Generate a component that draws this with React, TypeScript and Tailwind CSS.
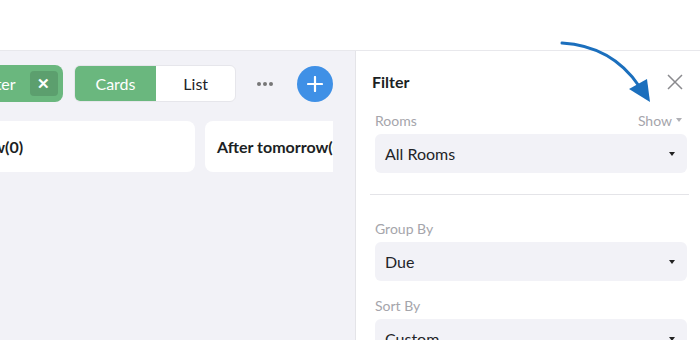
import React from "react";

const Caret = ({ className = "" }: { className?: string }) => (
  <svg width="6" height="4" viewBox="0 0 6 4" className={className}>
    <path d="M0 0 L6 0 L3 4 Z" fill="currentColor" />
  </svg>
);

function SelectBox({ value }: { value: string }) {
  return (
    <div className="h-[39px] rounded-md bg-[#f2f2f7] flex items-center justify-between pl-[10px] pr-[12px] text-[16px] text-[#222428]">
      <span>{value}</span>
      <Caret className="text-[#222]" />
    </div>
  );
}

export default function App() {
  return (
    <div
      className="relative w-[700px] h-[340px] overflow-hidden flex flex-col bg-white"
      style={{ fontFamily: "Lato, 'Open Sans', sans-serif" }}
    >
      <div className="h-[51px] bg-white border-b border-[#e8e8ec] shrink-0" />
      <div className="flex flex-1 min-h-0">
        {/* board */}
        <div className="w-[355px] bg-[#f2f2f7] shrink-0 overflow-hidden">
          <div className="w-[333px] overflow-hidden pt-[14px]">
            <div className="flex items-center h-[37px] ml-[-41px]">
              <div className="flex items-center h-[37px] rounded-lg bg-[#6ab77e] pl-[20px] pr-[5px]">
                <span className="text-[16px] text-white">Filter</span>
                <span className="ml-[14px] w-[28px] h-[25px] rounded-[4px] bg-[#5c9f6e] flex items-center justify-center text-white text-[15px] font-bold">
                  ✕
                </span>
              </div>
              <div className="ml-[11px] flex h-[37px] rounded-md overflow-hidden border border-[#e6e6eb] bg-white">
                <div className="w-[82px] bg-[#6ab77e] text-white text-[16px] flex items-center justify-center">Cards</div>
                <div className="w-[79px] text-[#222428] text-[16px] flex items-center justify-center">List</div>
              </div>
              <div className="ml-[21px] flex gap-[2px] items-center">
                <span className="w-[4px] h-[4px] rounded-full bg-[#777]" />
                <span className="w-[4px] h-[4px] rounded-full bg-[#777]" />
                <span className="w-[4px] h-[4px] rounded-full bg-[#777]" />
              </div>
              <div className="ml-[24px] w-[36px] h-[36px] rounded-full bg-[#3f90e6] flex items-center justify-center">
                <svg width="16" height="16" viewBox="0 0 16 16">
                  <path d="M8 1 V15 M1 8 H15" stroke="white" strokeWidth="2.2" strokeLinecap="round" />
                </svg>
              </div>
            </div>
            <div className="flex gap-[10px] mt-[19px] ml-[-92px]">
              <div className="w-[287px] h-[51px] shrink-0 rounded-lg bg-white flex items-center px-[12px]">
                <span className="text-[16px] font-bold text-[#1c1f24] pl-[12px]">Tomorrow(0)</span>
              </div>
              <div className="w-[285px] h-[51px] shrink-0 rounded-lg bg-white flex items-center px-[12px]">
                <span className="text-[16px] font-bold text-[#1c1f24] whitespace-nowrap">After tomorrow(0)</span>
              </div>
            </div>
          </div>
        </div>
        {/* filter panel */}
        <div className="flex-1 border-l border-[#e4e4e8] bg-white px-[13px]">
          <div className="flex items-center justify-between h-[34px] mt-[14px] pl-[3px] pr-[4px]">
            <span className="text-[16px] font-bold text-[#1c1f24]">Filter</span>
            <svg width="16" height="16" viewBox="0 0 16 16">
              <path d="M1 1 L15 15 M15 1 L1 15" stroke="#8a8a8e" strokeWidth="1.5" />
            </svg>
          </div>
          <div className="pl-[6px]">
            <div className="flex items-center justify-between h-[20px] mt-[11px] pr-[5px] text-[14px] text-[#a5a5ab]">
              <span>Rooms</span>
              <span className="flex items-center gap-[4px]">
                Show <Caret className="text-[#b0b0b5]" />
              </span>
            </div>
            <div className="mt-[4px]">
              <SelectBox value="All Rooms" />
            </div>
          </div>
          <div className="h-px bg-[#e4e4e8] mt-[21px] ml-[1px] mr-[-2px]" />
          <div className="pl-[6px]">
            <div className="h-[20px] mt-[23px] text-[14px] text-[#a5a5ab] flex items-center">Group By</div>
            <div className="mt-[4px]">
              <SelectBox value="Due" />
            </div>
            <div className="h-[20px] mt-[14px] text-[14px] text-[#a5a5ab] flex items-center">Sort By</div>
            <div className="mt-[4px]">
              <SelectBox value="Custom" />
            </div>
          </div>
        </div>
      </div>
      {/* annotation arrow */}
      <svg className="absolute left-0 top-0 pointer-events-none" width="700" height="340">
        <path d="M562 43 Q612 46 639 86" stroke="#1b6fbd" strokeWidth="3" fill="none" strokeLinecap="round" />
        <polygon points="650,102 629,89 647,79" fill="#1b6fbd" />
      </svg>
    </div>
  );
}
